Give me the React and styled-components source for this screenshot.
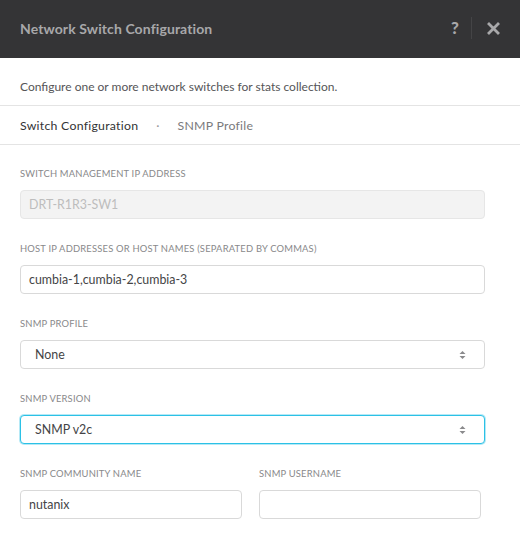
import React from 'react'
import styled, { createGlobalStyle } from 'styled-components'

const GlobalStyle = createGlobalStyle`
  html, body {
    margin: 0;
    padding: 0;
    background: #ffffff;
  }
  body {
    font-family: Lato, "Open Sans", sans-serif;
  }
`

const StModal = styled.div`
  width: 520px;
  height: 538px;
  background: #ffffff;
  overflow: hidden;
`

const StHeader = styled.div`
  height: 58px;
  background: #343436;
  display: flex;
  align-items: center;
  padding: 0 20px 2px;
  box-sizing: border-box;
`

const StTitle = styled.div`
  flex: 1;
  color: #a8a8aa;
  font-size: 14px;
  font-weight: bold;
  letter-spacing: 0.1px;
`

const StHeaderIcons = styled.div`
  display: flex;
  align-items: center;
  height: 100%;
`

const StHelp = styled.span`
  color: #a8a8aa;
  font-size: 17px;
  font-weight: 900;
  padding-right: 12px;
  margin-top: -2px;
`

const StSep = styled.div`
  width: 1px;
  height: 22px;
  background: #444446;
  margin-right: 15px;
`

const StDesc = styled.div`
  padding: 21px 20px 0;
  height: 48px;
  box-sizing: border-box;
  line-height: 15px;
  font-size: 12px;
  color: #555557;
  border-bottom: 1px solid #e4e4e4;
`

const StTabs = styled.div`
  display: flex;
  align-items: center;
  height: 38px;
  padding: 0 20px;
  border-bottom: 1px solid #e4e4e4;
  font-size: 12.3px;
`

const StTab = styled.span`
  color: ${(props) => (props.active ? '#333335' : '#7a7a7c')};
  letter-spacing: 0.25px;
`

const StDot = styled.span`
  color: #9a9a9a;
  margin: 0 18px;
`

const StForm = styled.div`
  padding: 23px 20px 0;
  display: flex;
  flex-direction: column;
  gap: 24px;
`

const StField = styled.div`
  display: flex;
  flex-direction: column;
  width: ${(props) => props.width || '465px'};
`

const StLabel = styled.div`
  font-size: 9.4px;
  color: #88888a;
  text-transform: uppercase;
  height: 11px;
  line-height: 11px;
  margin-bottom: 11px;
  letter-spacing: 0.2px;
`

const StInput = styled.div`
  height: 29px;
  box-sizing: border-box;
  border: 1px solid ${(props) => (props.$focus ? '#2bc1e6' : props.$disabled ? '#e6e6e6' : '#d9d9d9')};
  box-shadow: ${(props) => (props.$focus ? '0 0 0 1px rgba(43,193,230,0.35)' : 'none')};
  border-radius: 4px;
  background: ${(props) => (props.$disabled ? '#f3f3f3' : '#ffffff')};
  color: ${(props) => (props.$disabled ? '#bdbdbd' : '#444446')};
  display: flex;
  align-items: center;
  justify-content: space-between;
  padding: 0 ${(props) => (props.$select ? '18px' : '8px')} 0 ${(props) => (props.$select ? '14px' : '8px')};
  font-size: 12.4px;
`

const StRow = styled.div`
  display: flex;
  gap: 17px;
`

function Arrows() {
  return (
    <svg width="7" height="10" viewBox="0 0 7 10">
      <path d="M3.5 1 L6.5 4 L0.5 4 Z" fill="#8a8a8c" />
      <path d="M3.5 9 L6.5 6 L0.5 6 Z" fill="#8a8a8c" />
    </svg>
  )
}

function Close() {
  return (
    <svg width="13" height="13" viewBox="0 0 13 13">
      <path d="M2 2 L11 11 M11 2 L2 11" stroke="#a8a8aa" strokeWidth="2.8" strokeLinecap="square" />
    </svg>
  )
}

function App() {
  return (
    <StModal>
      <GlobalStyle />
      <StHeader>
        <StTitle>Network Switch Configuration</StTitle>
        <StHeaderIcons>
          <StHelp>?</StHelp>
          <StSep />
          <Close />
        </StHeaderIcons>
      </StHeader>

      <StDesc>Configure one or more network switches for stats collection.</StDesc>

      <StTabs>
        <StTab active>Switch Configuration</StTab>
        <StDot>·</StDot>
        <StTab>SNMP Profile</StTab>
      </StTabs>

      <StForm>
        <StField>
          <StLabel>Switch Management IP Address</StLabel>
          <StInput $disabled>DRT-R1R3-SW1</StInput>
        </StField>

        <StField>
          <StLabel>Host IP Addresses or Host Names (Separated by Commas)</StLabel>
          <StInput>cumbia-1,cumbia-2,cumbia-3</StInput>
        </StField>

        <StField>
          <StLabel>SNMP Profile</StLabel>
          <StInput $select>
            None
            <Arrows />
          </StInput>
        </StField>

        <StField>
          <StLabel>SNMP Version</StLabel>
          <StInput $select $focus>
            SNMP v2c
            <Arrows />
          </StInput>
        </StField>

        <StRow>
          <StField width="222px">
            <StLabel>SNMP Community Name</StLabel>
            <StInput>nutanix</StInput>
          </StField>
          <StField width="222px">
            <StLabel>SNMP Username</StLabel>
            <StInput />
          </StField>
        </StRow>
      </StForm>
    </StModal>
  )
}

export default App
